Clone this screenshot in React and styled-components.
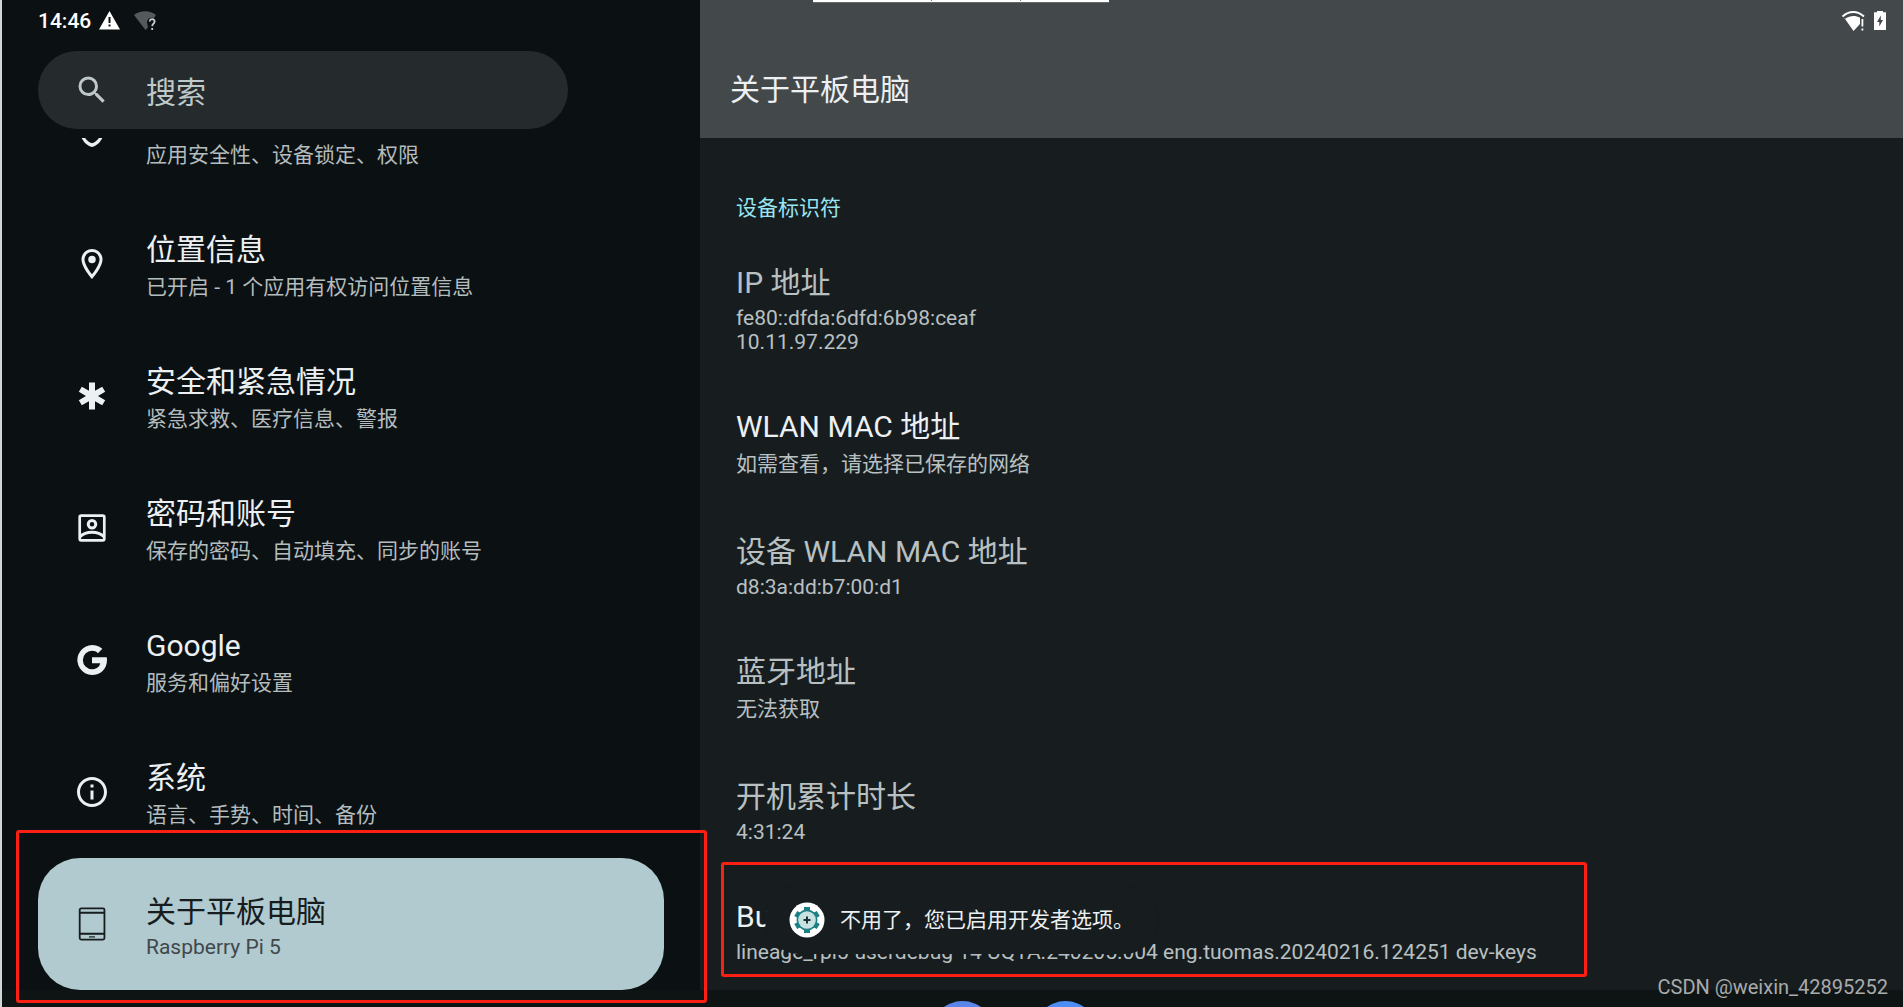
import React from 'react';
import styled, { createGlobalStyle } from 'styled-components';

const GlobalStyle = createGlobalStyle`
  *, *::before, *::after { box-sizing: border-box; }
  body {
    margin: 0;
    background: #0e1413;
    color: #ecf0f3;
    font-family: Roboto, 'Noto Sans CJK SC', sans-serif;
  }
  h1, h2, p, dl, dt, dd, ul { margin: 0; padding: 0; font-weight: 400; }
`;

const Screen = styled.div`
  position: relative;
  display: grid;
  grid-template-columns: 698fr 1203fr;
  grid-template-rows: minmax(0, 1fr) 17px;
  height: 100vh;
  overflow: hidden;
  border-left: 2px solid #d3d6d6;
`;

const Sidebar = styled.nav`
  display: flex;
  flex-direction: column;
  min-height: 0;
  padding: 0 36px;
  background: #0b1113;
`;

const StatusBar = styled.div`
  display: flex;
  align-items: center;
  gap: ${(p) => p.$gap}px;
  height: 41px;
  flex: none;
`;

const Clock = styled.time`
  font-size: 21px;
  line-height: 24px;
  font-weight: 500;
  color: #ffffff;
`;

const SearchBox = styled.label`
  display: flex;
  align-items: center;
  flex: none;
  height: 78px;
  width: 530px;
  max-width: 100%;
  margin: 10px 0 9px;
  padding-left: 36px;
  gap: 36px;
  border-radius: 39px;
  background: #252a2d;
  color: #bfc8ca;
`;

const SearchInput = styled.input`
  flex: 1;
  min-width: 0;
  height: 100%;
  border: 0;
  outline: 0;
  background: transparent;
  color: #bfc8ca;
  font-family: inherit;
  font-size: 30px;
  line-height: 46px;
  padding: 4px 40px 0 0;
  &::placeholder { color: #bfc8ca; opacity: 1; }
`;

const MenuList = styled.ul`
  display: flex;
  flex-direction: column;
  justify-content: flex-end;
  flex: 1;
  min-height: 0;
  overflow: hidden;
  list-style: none;
`;

const MenuLink = styled.a`
  display: flex;
  align-items: center;
  gap: 36px;
  height: 132px;
  padding-left: 36px;
  border-radius: 42px;
  text-decoration: none;
  background: ${(p) => (p.$active ? '#b1cacf' : 'transparent')};
  color: ${(p) => (p.$active ? '#171c1e' : '#ecf0f3')};
`;

const Glyph = styled.svg`
  width: ${(p) => p.$size || 36}px;
  height: ${(p) => p.$size || 36}px;
  flex: none;
  fill: currentColor;
`;

const Labels = styled.span`
  display: flex;
  flex-direction: column;
`;

const MenuTitle = styled.span`
  min-height: 46px;
  font-size: 30px;
  line-height: 46px;
`;

const MenuSummary = styled.span`
  font-size: 21px;
  line-height: ${(p) => (p.$latin ? 24 : 29)}px;
  color: ${(p) => (p.$active ? '#3f484a' : '#b4bcbe')};
`;

const Detail = styled.main`
  display: flex;
  flex-direction: column;
  min-height: 0;
  background: #171d1f;
`;

const DetailHeader = styled.header`
  display: flex;
  flex-direction: column;
  flex: none;
  height: 138px;
  padding-left: 30px;
  background: #43484a;
`;

const StatusIcons = styled(StatusBar)`
  justify-content: flex-end;
  padding-right: 11px;
  color: #ffffff;
`;

const PageTitle = styled.h1`
  margin-top: 26px;
  font-size: 30px;
  line-height: 46px;
`;

const Section = styled.section`
  padding: 56px 36px 0;
`;

const SectionTitle = styled.h2`
  margin-bottom: 12px;
  font-size: 21px;
  line-height: 29px;
  color: #97e6f2;
`;

const Row = styled.div`
  padding: 25px 0;
`;

const RowTitle = styled.dt`
  font-size: 30px;
  line-height: 46px;
  color: ${(p) => (p.$enabled ? '#ecf0f3' : '#b9c0c2')};
`;

const RowValue = styled.dd`
  font-size: 21px;
  line-height: ${(p) => (p.$latin ? 24 : 29)}px;
  color: #b9c0c2;
  white-space: nowrap;
`;

const Toast = styled.div`
  position: absolute;
  left: 763px;
  bottom: 53px;
  display: flex;
  align-items: center;
  gap: 15px;
  height: 68px;
  padding: 0 24px;
  border-radius: 34px;
  background: #171d1f;
  box-shadow: 0 0 2px rgba(0, 0, 0, 0.12);
  font-size: 21px;
  line-height: 29px;
  white-space: nowrap;
`;

const Highlight = styled.div`
  position: absolute;
  left: ${(p) => p.$left}px;
  bottom: ${(p) => p.$bottom}px;
  width: ${(p) => p.$width}px;
  height: ${(p) => p.$height}px;
  border: 3px solid #fb2013;
  border-radius: 3px;
  pointer-events: none;
`;

const TopStrip = styled.div`
  position: absolute;
  top: 0;
  left: 811px;
  display: grid;
  grid-template-columns: 118px 89px 89px;
  height: 3px;
  background: #ffffff;
  border-bottom: 1px solid #66696a;
`;

const StripCell = styled.span`
  height: 1px;
  border-left: ${(p) => (p.$divided ? '1px solid #777777' : '0')};
`;

const Dock = styled.footer`
  grid-column: 1 / -1;
  display: flex;
  justify-content: center;
  gap: 40px;
  padding: 11px 0 0 122px;
  overflow: hidden;
  background: #0e1413;
`;

const DockIcon = styled.span`
  flex: none;
  width: 63px;
  height: 63px;
  border-radius: 50%;
  background: ${(p) => p.$color};
`;

const Watermark = styled.span`
  position: absolute;
  right: 15px;
  bottom: 7px;
  font-size: 20px;
  line-height: 26px;
  color: #a9abac;
`;

const icons = {
  shield: (
    <path d="M12 2 4 5v6.09c0 5.05 3.41 9.76 8 10.91 4.59-1.15 8-5.86 8-10.91V5l-8-3zm6 9.09c0 4-2.55 7.3-6 8.43-3.45-1.13-6-4.42-6-8.43v-4.7l6-2.25 6 2.25v4.7z" />
  ),
  location: (
    <path d="M12 2C8.13 2 5 5.13 5 9c0 5.25 7 13 7 13s7-7.75 7-13c0-3.87-3.13-7-7-7zM7 9c0-2.76 2.24-5 5-5s5 2.24 5 5c0 2.88-2.88 7.19-5 9.88C9.92 16.21 7 11.85 7 9zm5-2.5a2.5 2.5 0 1 0 0 5 2.5 2.5 0 0 0 0-5z" />
  ),
  emergency: (
    <path d="M20.79 9.23l-2-3.46L14 8.54V3h-4v5.54L5.21 5.77l-2 3.46L8 12l-4.79 2.77 2 3.46L10 15.46V21h4v-5.54l4.79 2.77 2-3.46L16 12z" />
  ),
  account: (
    <g fill="none" stroke="currentColor">
      <rect x="3.800" y="3.800" width="16.400" height="16.400" rx="1" strokeWidth="1.800" />
      <circle cx="12" cy="9.500" r="2.500" strokeWidth="2" />
      <path d="M4 17.800c2.200-2.200 5-3 8-3s5.800.8 8 3" strokeWidth="2" />
    </g>
  ),
  google: (
    <path d="M12 10.200v3.900h5.500c-.5 2.300-2.500 4-5.500 4a6.100 6.100 0 1 1 0-12.200c1.520 0 2.900.55 3.970 1.520l2.900-2.900A10 10 0 1 0 12 22c5.600 0 10-4 10-10 0-.6-.1-1.200-.2-1.800z" />
  ),
  info: (
    <path d="M11 7h2v2h-2zm0 4h2v6h-2zm1-9C6.480 2 2 6.480 2 12s4.480 10 10 10 10-4.480 10-10S17.520 2 12 2zm0 18c-4.410 0-8-3.590-8-8s3.590-8 8-8 8 3.590 8 8-3.590 8-8 8z" />
  ),
  tablet: (
    <g fill="none" stroke="currentColor" strokeWidth="1.200">
      <rect x="3.800" y="1.600" width="16.500" height="20.800" rx="1" />
      <path d="M4 4.500h16M4 18.500h16" strokeWidth="1.400" />
      <path d="M10 20.600h4" strokeWidth="0.800" />
    </g>
  ),
  search: (
    <path d="M15.500 14h-.79l-.28-.27A6.470 6.470 0 0 0 16 9.500 6.500 6.500 0 1 0 9.500 16c1.610 0 3.090-.59 4.230-1.570l.27.28v.79l5 4.990L20.490 19l-4.990-5zm-6 0C7.010 14 5 11.990 5 9.500S7.010 5 9.500 5 14 7.010 14 9.500 11.990 14 9.500 14z" />
  ),
};

const menu = [
  { icon: 'shield', summary: '应用安全性、设备锁定、权限' },
  { icon: 'location', title: '位置信息', summary: '已开启 - 1 个应用有权访问位置信息' },
  { icon: 'emergency', title: '安全和紧急情况', summary: '紧急求救、医疗信息、警报' },
  { icon: 'account', title: '密码和账号', summary: '保存的密码、自动填充、同步的账号' },
  { icon: 'google', title: 'Google', summary: '服务和偏好设置' },
  { icon: 'info', title: '系统', summary: '语言、手势、时间、备份' },
  { icon: 'tablet', title: '关于平板电脑', summary: 'Raspberry Pi 5', active: true, latin: true },
];

const details = [
  { title: 'IP 地址', values: ['fe80::dfda:6dfd:6b98:ceaf', '10.11.97.229'], latin: true },
  { title: 'WLAN MAC 地址', values: ['如需查看，请选择已保存的网络'], enabled: true },
  { title: '设备 WLAN MAC 地址', values: ['d8:3a:dd:b7:00:d1'], latin: true },
  { title: '蓝牙地址', values: ['无法获取'] },
  { title: '开机累计时长', values: ['4:31:24'], latin: true },
  {
    title: 'Build',
    values: ['lineage_rpi5-userdebug 14 UQ1A.240205.004 eng.tuomas.20240216.124251 dev-keys'],
    latin: true,
    enabled: true,
  },
];

function Icon({ name }) {
  return (
    <Glyph viewBox="0 0 24 24" aria-hidden="true">
      {icons[name]}
    </Glyph>
  );
}

function GearBadge() {
  const teeth = [0, 60, 120, 180, 240, 300];
  return (
    <Glyph viewBox="0 0 36 36" aria-hidden="true">
      <circle cx="18" cy="18" r="17.500" fill="#ffffff" />
      {teeth.map((a) => (
        <rect key={a} x="15" y="5" width="6" height="6" fill="#1c8085" transform={`rotate(${a} 18 18)`} />
      ))}
      <circle cx="18" cy="18" r="10.500" fill="#1c8085" />
      <circle cx="18" cy="18" r="8.800" fill="#c8e2e2" />
      <path d="M17 14.500h2V17h2.500v2H19v2.500h-2V19h-2.500v-2H17z" fill="#1d3033" />
    </Glyph>
  );
}

export default function App() {
  return (
    <>
      <GlobalStyle />
      <Screen>
        <Sidebar aria-label="设置">
          <StatusBar $gap={8}>
            <Clock>14:46</Clock>
            <Glyph $size={21} viewBox="0 0 21 21" aria-hidden="true">
              <path d="M10.500 1 21 19.500H0zM9.500 7v6h2V7zm0 7.500v2h2v-2z" fillRule="evenodd" fill="#ffffff" />
            </Glyph>
            <Glyph $size={36} viewBox="0 0 36 36" aria-hidden="true">
              <path d="M6 12c6-5 16-5 22 0l-2 3c-4-1-7 1-7 4.500l1 5-2.500 2.500z" fill="#54595b" />
              <path d="M21.800 18.500c0-3.500 4.800-3 4.800 0 0 2.200-2.400 2.200-2.400 4.700M24.200 25v2" fill="none" stroke="#c9cccd" strokeWidth="1.800" />
            </Glyph>
          </StatusBar>
          <SearchBox>
            <Icon name="search" />
            <SearchInput type="text" placeholder="搜索" aria-label="搜索" />
          </SearchBox>
          <MenuList>
            {menu.map((m) => (
              <li key={m.icon}>
                <MenuLink href="#" $active={m.active} aria-current={m.active ? 'page' : undefined}>
                  <Icon name={m.icon} />
                  <Labels>
                    <MenuTitle>{m.title}</MenuTitle>
                    <MenuSummary $active={m.active} $latin={m.latin}>{m.summary}</MenuSummary>
                  </Labels>
                </MenuLink>
              </li>
            ))}
          </MenuList>
        </Sidebar>
        <Detail>
          <DetailHeader>
            <StatusIcons $gap={2}>
              <Glyph $size={24} viewBox="0 0 24 24" aria-hidden="true">
                <path d="M0.500 7.500C7 1.500 15.500 1.500 22 7.500" fill="none" stroke="#ffffff" strokeWidth="1.800" />
                <path d="M2 8.500l1.500 1.200c4-3.200 10-3.500 14.500-1V15l-6.500 7z" />
                <path d="M19.500 10h1.800v7.500h-1.800zM19.500 19.500h1.800v2h-1.800z" />
              </Glyph>
              <Glyph $size={24} viewBox="0 0 24 24" aria-hidden="true">
                <path d="M9 2h6v1.200h3V21H6V3.200h3zM12.800 6.500 9 13h2.300v4.500L15 11h-2.200z" fillRule="evenodd" />
              </Glyph>
            </StatusIcons>
            <PageTitle>关于平板电脑</PageTitle>
          </DetailHeader>
          <Section>
            <SectionTitle>设备标识符</SectionTitle>
            <dl>
              {details.map((d) => (
                <Row key={d.title}>
                  <RowTitle $enabled={d.enabled}>{d.title}</RowTitle>
                  {d.values.map((v) => (
                    <RowValue key={v} $latin={d.latin}>{v}</RowValue>
                  ))}
                </Row>
              ))}
            </dl>
          </Section>
        </Detail>
        <Dock>
          <DockIcon $color="#5a86ea" />
          <DockIcon $color="#4c8df6" />
        </Dock>
        <Toast role="status">
          <GearBadge />
          不用了，您已启用开发者选项。
        </Toast>
        <Highlight $left={14} $bottom={4} $width={691} $height={173} />
        <Highlight $left={719} $bottom={30} $width={866} $height={115} />
        <TopStrip>
          <StripCell />
          <StripCell $divided />
          <StripCell $divided />
        </TopStrip>
        <Watermark>CSDN @weixin_42895252</Watermark>
      </Screen>
    </>
  );
}
